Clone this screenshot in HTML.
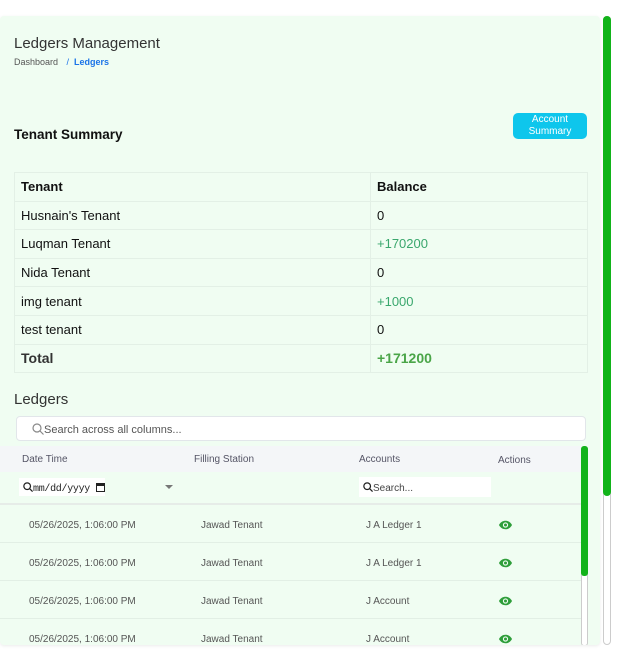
<!DOCTYPE html>
<html><head><style>
*{box-sizing:border-box;margin:0;padding:0}
body{width:617px;height:653px;background:#fff;font-family:"Liberation Sans",sans-serif;position:relative;overflow:hidden}
.card{position:absolute;left:0;top:16px;width:600px;height:629px;background:#f0fdf2;border-radius:4px;box-shadow:0 1px 3px rgba(0,0,0,.08);overflow:hidden}
.abs{position:absolute}
.sb{position:absolute;left:603px;top:16px;width:8px;height:629px;border:1px solid #ccc;border-radius:4px;background:#fff}
.sb div{position:absolute;left:-1px;top:-1px;width:8px;height:480px;background:#12b31a;border-radius:4px}
table.t{position:absolute;left:14px;top:172px;width:574px;border-collapse:collapse;font-size:13px;color:#111}
table.t td{border:1px solid #e3f0e6;height:28.6px;padding:0 6px}
table.t td:first-child{width:356px}
.g{color:#3aa76d}
.lh{position:absolute;left:0;top:446px;width:581px;height:26px;background:#f4f6f8;font-size:10px;color:#556}
.lh span,.row span{position:absolute}
.row{position:absolute;left:0;width:581px;height:38px;border-bottom:1px solid #e2efe5;font-size:10px;color:#555}
.eye{position:absolute;left:498px;top:15px}
</style></head><body>
<div class="card">
<div class="abs" style="left:14px;top:19px;font-size:15px;color:#333">Ledgers Management</div>
<div class="abs" style="left:14px;top:41px;font-size:9px;color:#555">Dashboard <span style="color:#1a73e8;margin-left:6px">/ &nbsp;<b style="font-weight:bold">Ledgers</b></span></div>
<div class="abs" style="left:14px;top:111px;font-size:13.5px;font-weight:bold;color:#111">Tenant Summary</div>
<div class="abs" style="left:513px;top:97px;width:74px;height:26px;background:#0ec6ec;border-radius:5px;color:#fff;font-size:10px;text-align:center;line-height:12px;padding-top:1px">Account<br>Summary</div>
<table class="t" style="top:156px">
<tr><td><b>Tenant</b></td><td><b>Balance</b></td></tr>
<tr><td>Husnain's Tenant</td><td>0</td></tr>
<tr><td>Luqman Tenant</td><td class="g">+170200</td></tr>
<tr><td>Nida Tenant</td><td>0</td></tr>
<tr><td>img tenant</td><td class="g">+1000</td></tr>
<tr><td>test tenant</td><td>0</td></tr>
<tr><td style="font-size:14px;font-weight:bold;color:#333">Total</td><td style="font-size:14px;font-weight:bold;color:#4aa548">+171200</td></tr>
</table>
<div class="abs" style="left:14px;top:375px;font-size:15px;color:#333">Ledgers</div>
<div class="abs" style="left:16px;top:400px;width:570px;height:25px;background:#fff;border:1px solid #e2e6ea;border-radius:4px;font-size:11px;color:#555;padding:6px 0 0 15px">
<svg width="12" height="12" viewBox="0 0 12 12" style="vertical-align:-2px"><circle cx="5" cy="5" r="4" fill="none" stroke="#888" stroke-width="1.2"/><path d="M8 8l3.5 3.5" stroke="#888" stroke-width="1.2"/></svg>Search across all columns...</div>
<div class="lh" style="top:430px"><span style="left:22px;top:8px">Date Time</span><span style="left:194px;top:8px">Filling Station</span><span style="left:359px;top:8px">Accounts</span><span style="left:498px;top:9px">Actions</span></div>
<div class="abs" style="left:0;top:456px;width:581px;height:33px;border-bottom:2px solid #e6ece8">
<div class="abs" style="left:19px;top:6px;width:86px;height:18px;background:#fff;font-family:'Liberation Mono',monospace;font-size:10px;padding:4px 0 0 4px;color:#222;white-space:nowrap;letter-spacing:-0.3px">
<svg width="10" height="10" viewBox="0 0 12 12" style="vertical-align:-1px"><circle cx="5" cy="5" r="4" fill="none" stroke="#222" stroke-width="1.5"/><path d="M8 8l3.5 3.5" stroke="#222" stroke-width="1.5"/></svg>mm/dd/yyyy<span style="display:inline-block;width:9px;height:9px;border:1.5px solid #222;border-top-width:3px;vertical-align:-1px;margin-left:6px"></span></div>
<div class="abs" style="left:165px;top:13px;width:0;height:0;border-left:4px solid transparent;border-right:4px solid transparent;border-top:4px solid #777"></div>
<div class="abs" style="left:359px;top:5px;width:132px;height:20px;background:#fff;font-size:10px;color:#444;padding:5px 0 0 4px">
<svg width="10" height="10" viewBox="0 0 12 12" style="vertical-align:-1px"><circle cx="5" cy="5" r="4" fill="none" stroke="#222" stroke-width="1.5"/><path d="M8 8l3.5 3.5" stroke="#222" stroke-width="1.5"/></svg>Search...</div>
</div>
<div class="row" style="top:489px"><span style="left:29px;top:15px">05/26/2025, 1:06:00 PM</span><span style="left:201px;top:15px">Jawad Tenant</span><span style="left:366px;top:15px">J A Ledger 1</span><svg class="eye" width="15" height="10" viewBox="0 0 16 10"><path d="M1 5C3 1.5 5.5 0.5 8 0.5S13 1.5 15 5C13 8.5 10.5 9.5 8 9.5S3 8.5 1 5Z" fill="#2e9e3a"/><circle cx="8" cy="5" r="2.8" fill="#f0fdf2"/><circle cx="8" cy="5" r="1.6" fill="#2e9e3a"/></svg></div>
<div class="row" style="top:527px"><span style="left:29px;top:15px">05/26/2025, 1:06:00 PM</span><span style="left:201px;top:15px">Jawad Tenant</span><span style="left:366px;top:15px">J A Ledger 1</span><svg class="eye" width="15" height="10" viewBox="0 0 16 10"><path d="M1 5C3 1.5 5.5 0.5 8 0.5S13 1.5 15 5C13 8.5 10.5 9.5 8 9.5S3 8.5 1 5Z" fill="#2e9e3a"/><circle cx="8" cy="5" r="2.8" fill="#f0fdf2"/><circle cx="8" cy="5" r="1.6" fill="#2e9e3a"/></svg></div>
<div class="row" style="top:565px"><span style="left:29px;top:15px">05/26/2025, 1:06:00 PM</span><span style="left:201px;top:15px">Jawad Tenant</span><span style="left:366px;top:15px">J Account</span><svg class="eye" width="15" height="10" viewBox="0 0 16 10"><path d="M1 5C3 1.5 5.5 0.5 8 0.5S13 1.5 15 5C13 8.5 10.5 9.5 8 9.5S3 8.5 1 5Z" fill="#2e9e3a"/><circle cx="8" cy="5" r="2.8" fill="#f0fdf2"/><circle cx="8" cy="5" r="1.6" fill="#2e9e3a"/></svg></div>
<div class="row" style="top:603px"><span style="left:29px;top:15px">05/26/2025, 1:06:00 PM</span><span style="left:201px;top:15px">Jawad Tenant</span><span style="left:366px;top:15px">J Account</span><svg class="eye" width="15" height="10" viewBox="0 0 16 10"><path d="M1 5C3 1.5 5.5 0.5 8 0.5S13 1.5 15 5C13 8.5 10.5 9.5 8 9.5S3 8.5 1 5Z" fill="#2e9e3a"/><circle cx="8" cy="5" r="2.8" fill="#f0fdf2"/><circle cx="8" cy="5" r="1.6" fill="#2e9e3a"/></svg></div>
<div class="abs" style="left:581px;top:430px;width:7px;height:200px;border:1px solid #ccc;border-radius:3px;background:#fff"><div style="position:absolute;left:-1px;top:-1px;width:7px;height:130px;background:#12b31a;border-radius:3px"></div></div>
</div>
<div class="sb"><div></div></div>
</body></html>
